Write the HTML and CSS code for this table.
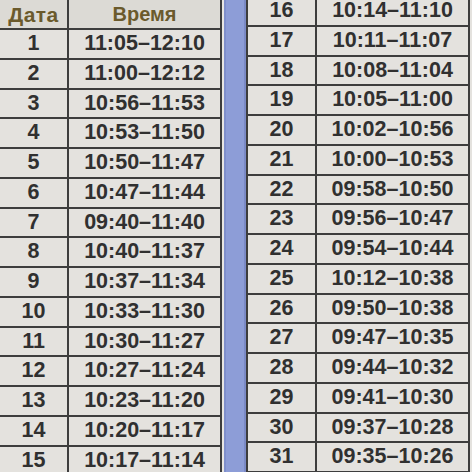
FILE: index.html
```html
<!DOCTYPE html>
<html lang="ru">
<head>
<meta charset="utf-8">
<link rel="stylesheet" href="styles.css">
</head>
<body>
<div class="page">
  <table class="sched sched-left">
    <tr class="head"><th class="c-date">Дата</th><th class="c-time">Время</th></tr>
    <tr><td class="c-date">1</td><td class="c-time">11:05–12:10</td></tr>
    <tr><td class="c-date">2</td><td class="c-time">11:00–12:12</td></tr>
    <tr><td class="c-date">3</td><td class="c-time">10:56–11:53</td></tr>
    <tr><td class="c-date">4</td><td class="c-time">10:53–11:50</td></tr>
    <tr><td class="c-date">5</td><td class="c-time">10:50–11:47</td></tr>
    <tr><td class="c-date">6</td><td class="c-time">10:47–11:44</td></tr>
    <tr><td class="c-date">7</td><td class="c-time">09:40–11:40</td></tr>
    <tr><td class="c-date">8</td><td class="c-time">10:40–11:37</td></tr>
    <tr><td class="c-date">9</td><td class="c-time">10:37–11:34</td></tr>
    <tr><td class="c-date">10</td><td class="c-time">10:33–11:30</td></tr>
    <tr><td class="c-date">11</td><td class="c-time">10:30–11:27</td></tr>
    <tr><td class="c-date">12</td><td class="c-time">10:27–11:24</td></tr>
    <tr><td class="c-date">13</td><td class="c-time">10:23–11:20</td></tr>
    <tr><td class="c-date">14</td><td class="c-time">10:20–11:17</td></tr>
    <tr><td class="c-date">15</td><td class="c-time">10:17–11:14</td></tr>
  </table>
  <div class="gap"></div>
  <div class="stripe"></div>
  <table class="sched sched-right">
    <tr><td class="c-date">16</td><td class="c-time">10:14–11:10</td></tr>
    <tr><td class="c-date">17</td><td class="c-time">10:11–11:07</td></tr>
    <tr><td class="c-date">18</td><td class="c-time">10:08–11:04</td></tr>
    <tr><td class="c-date">19</td><td class="c-time">10:05–11:00</td></tr>
    <tr><td class="c-date">20</td><td class="c-time">10:02–10:56</td></tr>
    <tr><td class="c-date">21</td><td class="c-time">10:00–10:53</td></tr>
    <tr><td class="c-date">22</td><td class="c-time">09:58–10:50</td></tr>
    <tr><td class="c-date">23</td><td class="c-time">09:56–10:47</td></tr>
    <tr><td class="c-date">24</td><td class="c-time">09:54–10:44</td></tr>
    <tr><td class="c-date">25</td><td class="c-time">10:12–10:38</td></tr>
    <tr><td class="c-date">26</td><td class="c-time">09:50–10:38</td></tr>
    <tr><td class="c-date">27</td><td class="c-time">09:47–10:35</td></tr>
    <tr><td class="c-date">28</td><td class="c-time">09:44–10:32</td></tr>
    <tr><td class="c-date">29</td><td class="c-time">09:41–10:30</td></tr>
    <tr><td class="c-date">30</td><td class="c-time">09:37–10:28</td></tr>
    <tr><td class="c-date">31</td><td class="c-time">09:35–10:26</td></tr>
  </table>
</div>
</body>
</html>
```

FILE: styles.css
```css
html, body {
  margin: 0;
  padding: 0;
}
body {
  background: #e3e1dd;
  font-family: "Liberation Sans", Arial, sans-serif;
}
.page {
  width: 472px;
  height: 472px;
  overflow: hidden;
  display: flex;
  align-items: flex-start;
  background: #e4e2de;
}
.sched {
  border-collapse: collapse;
  table-layout: fixed;
  flex: none;
}
.sched td, .sched th {
  border: 2px solid #3d3d3d;
  padding: 0;
  text-align: center;
  vertical-align: middle;
  font-weight: bold;
  font-size: 21.5px;
  color: #303030;
  line-height: 1;
  white-space: nowrap;
}
.sched tr {
  height: 29.75px;
}
.sched-left {
  width: 224px;
  margin-left: -2px;
  margin-top: -2px;
}
.sched-left .c-date { width: 67px; }
.sched-left .head {
  height: 30px;
}
.sched-left .head th {
  color: #6b5a2c;
  font-size: 20px;
  vertical-align: middle;
  background: #dcdad5;
}
.sched-left .head th.c-date {
  font-size: 21px;
  letter-spacing: 0.5px;
}
.gap {
  flex: none;
  width: 2px;
  height: 472px;
  background: #e8e6e2;
}
.stripe {
  flex: none;
  width: 22px;
  height: 472px;
  background: #8d9dd7;
  box-shadow: inset 2px 0 0 #7f8fcb, inset -2px 0 0 #7b8ac6;
}
.sched-right {
  width: 224px;
  margin-top: -5px;
}
.sched-right .c-date { width: 67px; }
```
